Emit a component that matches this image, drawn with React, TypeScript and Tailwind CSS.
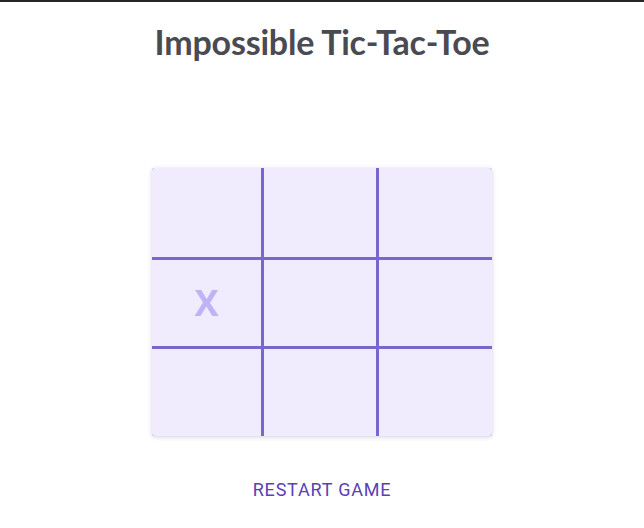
import { useState } from "react";

type Mark = "X" | "O" | null;

export default function App() {
  const [cells, setCells] = useState<Mark[]>([
    null, null, null,
    "X", null, null,
    null, null, null,
  ]);

  return (
    <div className="min-h-[528px] w-full border-t-2 border-[#262626] bg-white">
      <h1 className="pt-[20px] text-center text-[34px] font-bold leading-[40px] tracking-[-0.2px] text-[#4a4a52] [font-family:Lato,'Noto_Sans',sans-serif]">
        Impossible Tic-Tac-Toe
      </h1>

      <div className="mx-auto mt-[106px] grid h-[268px] w-[340px] grid-cols-[109px_112px_113px] grid-rows-[89px_86px_87px] gap-[3px] overflow-hidden rounded-[3px] bg-[#7a66cf] shadow-[0_1px_4px_rgba(80,60,140,0.25)]">
        {cells.map((cell, i) => (
          <button
            key={i}
            onClick={() => setCells((prev) => prev.map((c, j) => (j === i && !c ? "X" : c)))}
            className="flex items-center justify-center bg-[#f1ebfe] text-[36px] font-bold text-[#c0b3f3] [font-family:'Open_Sans',sans-serif]"
          >
            {cell}
          </button>
        ))}
      </div>

      <div className="mt-[35px] flex justify-center">
        <button
          onClick={() => setCells(Array(9).fill(null))}
          className="h-9 px-2 text-[18px] uppercase tracking-[0.8px] text-[#5a41b6] [font-family:Roboto,sans-serif]"
        >
          Restart Game
        </button>
      </div>
    </div>
  );
}
